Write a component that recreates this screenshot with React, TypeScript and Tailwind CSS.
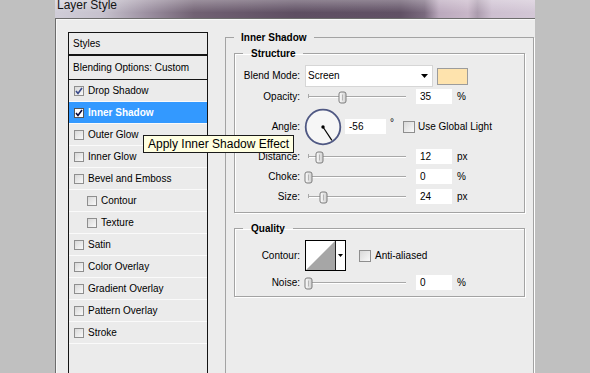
import React from "react";

type Effect = { label: string; checked?: boolean; active?: boolean; indent?: boolean };

const effects: Effect[] = [
  { label: "Drop Shadow", checked: true },
  { label: "Inner Shadow", checked: true, active: true },
  { label: "Outer Glow" },
  { label: "Inner Glow" },
  { label: "Bevel and Emboss" },
  { label: "Contour", indent: true },
  { label: "Texture", indent: true },
  { label: "Satin" },
  { label: "Color Overlay" },
  { label: "Gradient Overlay" },
  { label: "Pattern Overlay" },
  { label: "Stroke" },
];

function Check({ checked, active, big }: { checked?: boolean; active?: boolean; big?: boolean }) {
  const size = big ? "w-[12px] h-[12px]" : "w-[10px] h-[10px]";
  const bg = active ? "bg-white border-[#555]" : "bg-[linear-gradient(135deg,#d8d8d8,#f9f9f9)] border-[#8e8e8e]";
  return (
    <div className={`${size} ${bg} border shrink-0 flex items-center justify-center`}>
      {checked && (
        <svg width="8" height="8" viewBox="0 0 8 8">
          <path d="M1 4 L3 6.5 L7 1" fill="none" stroke={active ? "#0a0a3a" : "#3a4a8a"} strokeWidth="1.6" />
        </svg>
      )}
    </div>
  );
}

function Thumb({ left }: { left: number }) {
  return (
    <svg className="absolute top-[2px]" style={{ left }} width="9" height="13" viewBox="0 0 9 13">
      <defs>
        <linearGradient id="tg" x1="0" y1="0" x2="1" y2="0">
          <stop offset="0" stopColor="#fdfdfd" />
          <stop offset="1" stopColor="#cfcfcf" />
        </linearGradient>
      </defs>
      <path d="M1 3 Q1 1 3 1 H6 Q8 1 8 3 V10 Q8 12 6 12 H3 Q1 12 1 10 Z" fill="url(#tg)" stroke="#7d7d7d" strokeWidth="1" />
      <line x1="4.5" y1="3.5" x2="4.5" y2="9.5" stroke="#b5b5b5" strokeWidth="1" />
    </svg>
  );
}

function Slider({ pct }: { pct: number }) {
  return (
    <div className="relative w-[104px] h-[15px] shrink-0">
      <div className="absolute left-[3px] top-[7px] w-[98px] h-[1px] bg-[#a8a8a8] shadow-[0_1px_0_#ffffff]" />
      <div className="absolute left-[3px] top-[5px] w-[1px] h-[4px] bg-[#a8a8a8]" />
      <Thumb left={3 + pct * 98 - 4.5} />
    </div>
  );
}

function NumBox({ value, w = "w-[36px]" }: { value: string; w?: string }) {
  return <div className={`${w} h-[15px] bg-white pl-[4px] flex items-center leading-none shrink-0`}>{value}</div>;
}

function Label({ children }: { children: React.ReactNode }) {
  return <div className="w-[65px] text-right shrink-0 leading-none">{children}</div>;
}

function SliderRow({ label, pct, value, unit, cls }: { label: string; pct: number; value: string; unit: string; cls: string }) {
  return (
    <div className={`flex items-center h-[15px] ${cls}`}>
      <Label>{label}</Label>
      <div className="ml-[5px]">
        <Slider pct={pct} />
      </div>
      <div className="ml-[7px]">
        <NumBox value={value} />
      </div>
      <div className="ml-[5px] leading-none">{unit}</div>
    </div>
  );
}

function Arrow() {
  return (
    <svg width="7" height="4" viewBox="0 0 7 4">
      <path d="M0 0 H7 L3.5 4 Z" fill="#000" />
    </svg>
  );
}

export default function App() {
  return (
    <div className="relative w-[590px] h-[373px] overflow-hidden bg-[#c0c0c0] flex font-['Liberation_Sans',Arial,sans-serif] text-[10px] text-black">
      <div className="ml-[55px] w-[480px] h-full flex flex-col shrink-0">
        {/* title bar */}
        <div className="h-[18px] shrink-0 pl-[2px] bg-[linear-gradient(to_bottom,rgba(255,255,255,0.3),rgba(255,255,255,0)_70%),linear-gradient(to_right,#d0cdd8_0%,#c6c1cd_10%,#9d91a2_19%,#716173_29%,#5e4e62_50%,#615165_72%,#7a6a7e_77%,#bba9bd_80%,#c8b6c8_86%,#ac9cae_88%,#cdbfd0_91%,#d3c7d6_100%)]">
          <div className="text-[12px] leading-[12px] -mt-[1px] text-[#141414]">Layer Style</div>
        </div>
        {/* body */}
        <div className="flex-1 flex items-start bg-[#ececec] border-l border-t border-[#6d6d6d] pl-[12px] shadow-[inset_1px_1px_0_#f8f8f8]">
          {/* styles list */}
          <div className="mt-[13px] w-[140px] h-[400px] border border-[#141414] bg-[#ebebeb] shrink-0">
            <div className="h-[23px] border-b-2 border-[#141414] flex items-center pl-[4px]">Styles</div>
            <div className="h-[24px] border-b border-[#141414] flex items-center pl-[4px]">Blending Options: Custom</div>
            {effects.map((e) => (
              <div
                key={e.label}
                className={`h-[22px] border-b border-[#fafafa] flex items-center ${e.indent ? "pl-[18px]" : "pl-[5px]"} ${e.active ? "bg-[#3399ff] text-white font-bold" : ""}`}
              >
                <Check checked={e.checked} active={e.active} />
                <span className="ml-[4px]">{e.label}</span>
              </div>
            ))}
          </div>

          {/* Inner Shadow group */}
          <fieldset className="ml-[17px] mt-[11px] w-[309px] h-[400px] shrink-0 border border-[#a3a3a3] shadow-[1px_1px_0_#ffffff]">
            <legend className="ml-[8px] px-[7px] font-bold leading-[15px]">Inner Shadow</legend>

            {/* Structure */}
            <fieldset className="mx-[8px] mt-[1px] pt-[4px] pb-[8px] border border-[#a3a3a3] shadow-[1px_1px_0_#ffffff,inset_1px_1px_0_#ffffff]">
              <legend className="ml-[8px] px-[8px] font-bold leading-[15px]">Structure</legend>

              <div className="flex items-center h-[22px]">
                <Label>Blend Mode:</Label>
                <div className="ml-[5px] w-[128px] h-[22px] bg-white border border-[#d6d6d6] flex items-center justify-between pl-[2px] pr-[4px] shrink-0">
                  <span className="leading-none">Screen</span>
                  <Arrow />
                </div>
                <div className="ml-[4px] w-[31px] h-[17px] bg-[#fee3ad] border border-[#9c9c9c] shrink-0" />
              </div>

              <SliderRow label="Opacity:" pct={0.35} value="35" unit="%" cls="mt-[2px]" />

              <div className="flex items-center h-[38px] mt-[4px]">
                <Label>Angle:</Label>
                <svg className="ml-[4px] shrink-0" width="38" height="38" viewBox="0 0 38 38">
                  <circle cx="19" cy="19" r="17.3" fill="#f6f6f6" stroke="#4f5883" strokeWidth="1.8" />
                  <line x1="19" y1="19" x2="27.9" y2="32.3" stroke="#000" strokeWidth="1.2" />
                  <circle cx="19" cy="19" r="1.7" fill="#000" />
                </svg>
                <div className="ml-[3px] -mt-[1px]">
                  <NumBox value="-56" w="w-[41px]" />
                </div>
                <div className="ml-[4px] self-start mt-[10px] leading-none">°</div>
                <div className="ml-[9px]">
                  <Check big />
                </div>
                <span className="ml-[3px] leading-none">Use Global Light</span>
              </div>

              <SliderRow label="Distance:" pct={0.12} value="12" unit="px" cls="mt-[3px]" />
              <SliderRow label="Choke:" pct={0} value="0" unit="%" cls="mt-[5px]" />
              <SliderRow label="Size:" pct={0.163} value="24" unit="px" cls="mt-[5px]" />
            </fieldset>

            {/* Quality */}
            <fieldset className="mx-[8px] mt-[8px] pt-[4px] pb-[6px] border border-[#a3a3a3] shadow-[1px_1px_0_#ffffff,inset_1px_1px_0_#ffffff]">
              <legend className="ml-[8px] px-[8px] font-bold leading-[15px]">Quality</legend>

              <div className="flex items-center h-[31px]">
                <Label>Contour:</Label>
                <div className="ml-[5px] w-[41px] h-[31px] border border-black bg-white flex shrink-0">
                  <svg width="29" height="29" viewBox="0 0 29 29" className="shrink-0">
                    <path d="M0 29 L29 0 V29 Z" fill="#a6a6a6" />
                  </svg>
                  <div className="w-[1px] h-full bg-[#222]" />
                  <div className="flex-1 flex items-center justify-center">
                    <svg width="5" height="3" viewBox="0 0 5 3">
                      <path d="M0 0 H5 L2.5 3 Z" fill="#000" />
                    </svg>
                  </div>
                </div>
                <div className="ml-[13px]">
                  <Check big />
                </div>
                <span className="ml-[4px] leading-none">Anti-aliased</span>
              </div>

              <SliderRow label="Noise:" pct={0} value="0" unit="%" cls="mt-[4px]" />
            </fieldset>
          </fieldset>
        </div>
      </div>

      {/* tooltip */}
      <div className="absolute left-[143px] top-[135px] h-[18px] pl-[4px] pr-[4px] border border-[#1a1a1a] bg-[#ffffe1] flex items-center text-[12px] leading-none text-black whitespace-nowrap">
        Apply Inner Shadow Effect
      </div>
    </div>
  );
}
